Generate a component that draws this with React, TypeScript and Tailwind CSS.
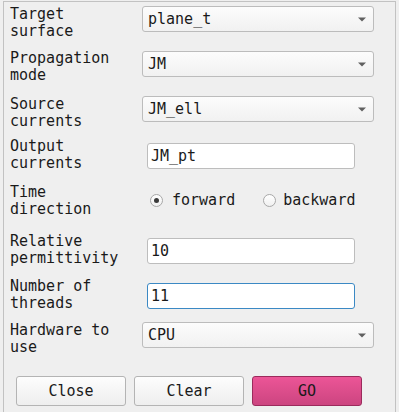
import { useState } from 'react';

const font = { fontFamily: '"DejaVu Sans Mono", "Liberation Mono", monospace' };

function Label({ lines }: { lines: string[] }) {
  return (
    <div className="w-[132px] shrink-0 text-[15px] leading-[17px] text-[#1a1a1a]">
      {lines.map((l) => (
        <div key={l} className="whitespace-pre">
          {l}
        </div>
      ))}
    </div>
  );
}

function Combo({ value, className = '' }: { value: string; className?: string }) {
  return (
    <div
      className={`flex h-[26px] w-[232px] items-center justify-between rounded-[3px] border border-[#bcbcbc] bg-gradient-to-b from-[#fcfcfc] to-[#f1f1f1] pl-[5px] pr-[7px] text-[15px] text-[#1a1a1a] ${className}`}
    >
      <span>{value}</span>
      <svg width="8" height="5" viewBox="0 0 8 5">
        <path d="M0 0.5 L8 0.5 L4 4.5 Z" fill="#606060" />
      </svg>
    </div>
  );
}

function TextBox({ value, focused = false }: { value: string; focused?: boolean }) {
  return (
    <div
      className={`ml-[5px] mt-[5px] flex h-[26px] w-[208px] items-center rounded-[3px] border bg-white pl-[3px] text-[15px] text-[#1a1a1a] ${
        focused ? 'border-[#3b89c4]' : 'border-[#bdbdbd]'
      }`}
    >
      {value}
    </div>
  );
}

function Radio({ checked }: { checked: boolean }) {
  return (
    <div className="flex h-[13px] w-[13px] items-center justify-center rounded-full border border-[#a8a8a8] bg-gradient-to-b from-[#ffffff] to-[#f0f0f0]">
      {checked && <div className="h-[5px] w-[5px] rounded-full bg-[#3a3a3a]" />}
    </div>
  );
}

export default function App() {
  const [dir, setDir] = useState<'forward' | 'backward'>('forward');

  return (
    <div className="h-[412px] w-[399px] overflow-hidden bg-[#efefef]" style={font}>
      <div className="ml-[3px] mt-[1px] h-[420px] w-[393px] border-l border-r border-t border-[#c2c2c2] pl-[6px] pt-[4px]">
        {/* Target surface */}
        <div className="flex h-[44px] items-start">
          <Label lines={['Target', 'surface']} />
          <Combo value="plane_t" />
        </div>

        {/* Propagation mode */}
        <div className="flex h-[46px] items-start">
          <Label lines={['Propagation', 'mode']} />
          <Combo value="JM" className="mt-[1px]" />
        </div>

        {/* Source currents */}
        <div className="flex h-[42px] items-start">
          <Label lines={['Source', 'currents']} />
          <Combo value="JM_ell" />
        </div>

        {/* Output currents */}
        <div className="flex h-[46px] items-start">
          <Label lines={['Output', 'currents']} />
          <TextBox value="JM_pt" />
        </div>

        {/* Time direction */}
        <div className="flex h-[49px] items-start">
          <Label lines={['Time', 'direction']} />
          <div className="ml-[8px] mt-[8px] flex items-center text-[15px] leading-[17px] text-[#1a1a1a]">
            <button className="flex items-center gap-[9px]" onClick={() => setDir('forward')}>
              <Radio checked={dir === 'forward'} />
              <span>forward</span>
            </button>
            <button className="ml-[28px] flex items-center gap-[7px]" onClick={() => setDir('backward')}>
              <Radio checked={dir === 'backward'} />
              <span>backward</span>
            </button>
          </div>
        </div>

        {/* Relative permittivity */}
        <div className="flex h-[45px] items-start">
          <Label lines={['Relative', 'permittivity']} />
          <TextBox value="10" />
        </div>

        {/* Number of threads */}
        <div className="flex h-[44px] items-start">
          <Label lines={['Number of', 'threads']} />
          <TextBox value="11" focused />
        </div>

        {/* Hardware to use */}
        <div className="flex h-[54px] items-start">
          <Label lines={['Hardware to', 'use']} />
          <Combo value="CPU" />
        </div>

        {/* Buttons */}
        <div className="ml-[6px] flex gap-[8px] text-[15px]">
          <button className="h-[30px] w-[110px] rounded-[3px] border border-[#b4b4b4] bg-gradient-to-b from-[#fdfdfd] to-[#eeeeee] text-[#1a1a1a]">
            Close
          </button>
          <button className="h-[30px] w-[110px] rounded-[3px] border border-[#b4b4b4] bg-gradient-to-b from-[#fdfdfd] to-[#eeeeee] text-[#1a1a1a]">
            Clear
          </button>
          <button className="h-[30px] w-[110px] rounded-[3px] border border-[#9b2b5c] bg-gradient-to-b from-[#ec5597] to-[#cc4580] text-[#1a1a1a]">
            GO
          </button>
        </div>
      </div>
    </div>
  );
}
